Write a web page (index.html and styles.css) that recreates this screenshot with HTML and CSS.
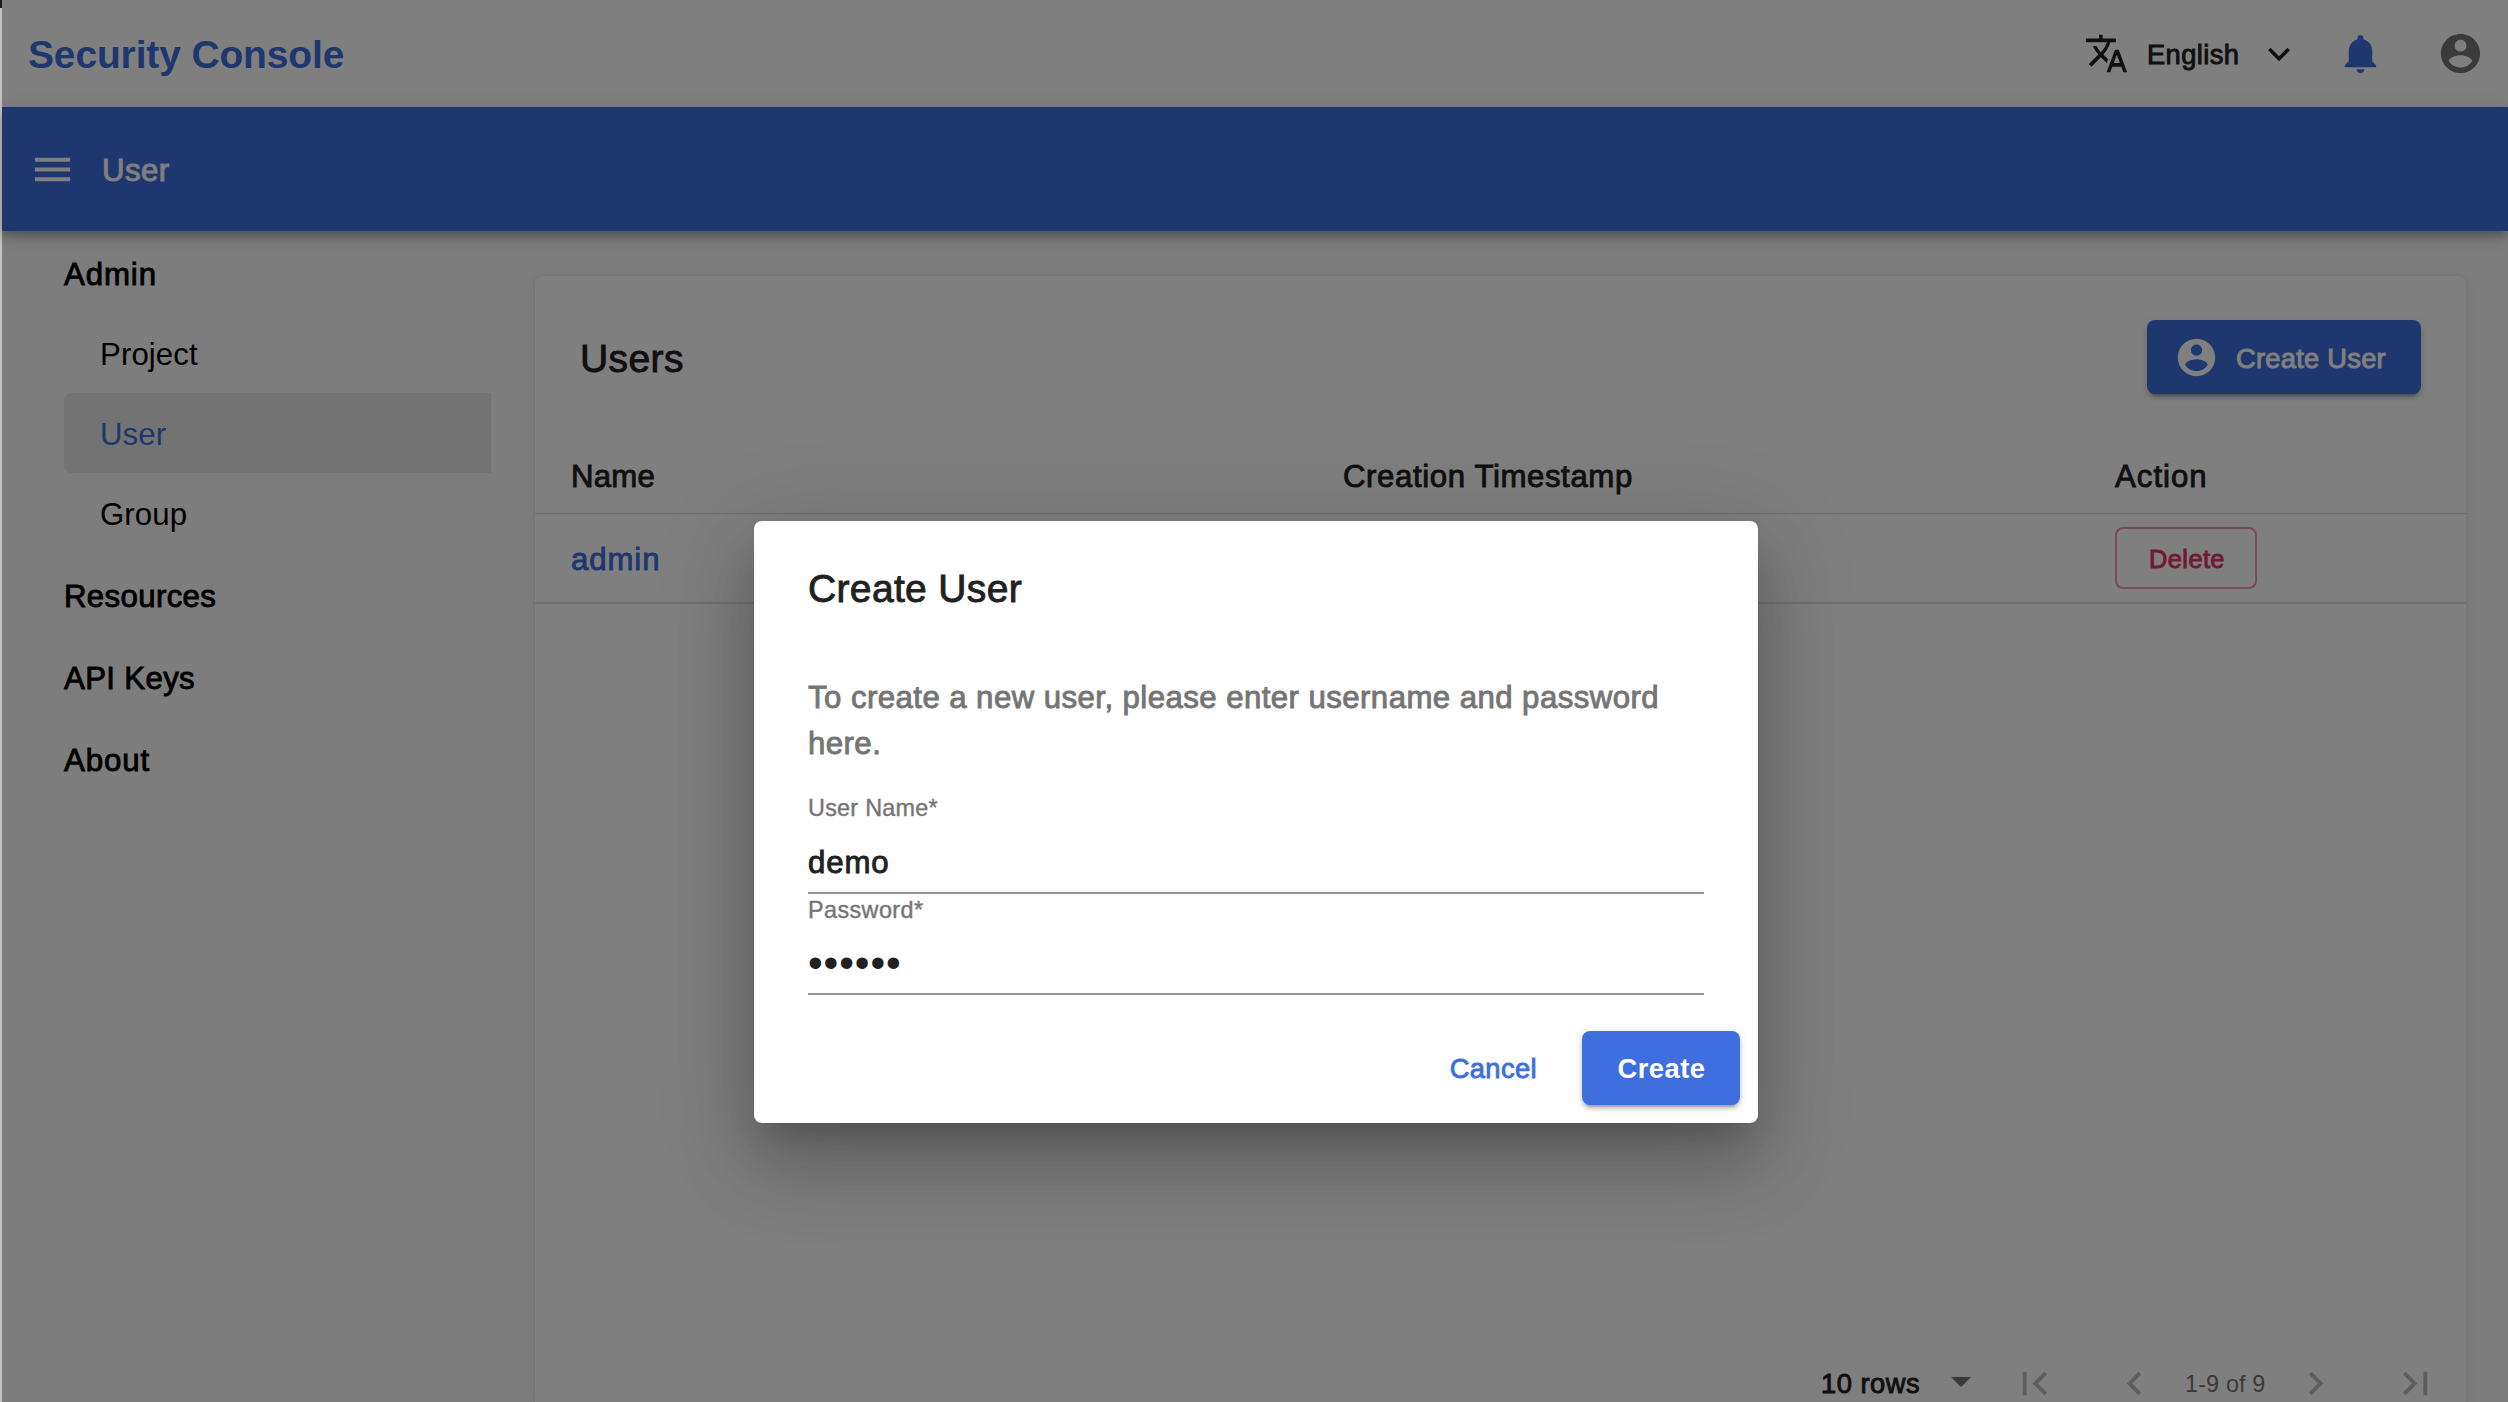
FILE: index.html
```html
<!DOCTYPE html>
<html lang="en">
<head>
<meta charset="utf-8">
<title>Security Console</title>
<link rel="stylesheet" href="styles.css">
</head>
<body>
<div class="app">
  <header class="topbar">
    <h1 class="brand">Security Console</h1>
    <div class="tools">
      <svg class="icon icon-translate" viewBox="0 0 24 24"><path d="M12.87 15.07l-2.54-2.51.03-.03c1.74-1.94 2.98-4.17 3.71-6.53H17V4h-7V2H8v2H1v1.99h11.17C11.5 7.92 10.44 9.75 9 11.35 8.07 10.32 7.3 9.19 6.69 8h-2c.73 1.63 1.73 3.17 2.98 4.56l-5.09 5.02L4 19l5-5 3.11 3.11.76-2.04zM18.5 10h-2L12 22h2l1.12-3h4.75L21 22h2l-4.5-12zm-2.62 7l1.62-4.33L19.12 17h-3.24z"/></svg>
      <span class="language medium">English</span>
      <svg class="icon icon-expand" viewBox="0 0 24 24"><path d="M7.41 8.59 12 13.17l4.59-4.58L18 10l-6 6-6-6z"/></svg>
      <svg class="icon icon-bell" viewBox="0 0 24 24"><path d="M12 22c1.1 0 2-.9 2-2h-4c0 1.1.89 2 2 2zm6-6v-5c0-3.07-1.64-5.64-4.5-6.32V4c0-.83-.67-1.5-1.5-1.5s-1.5.67-1.5 1.5v.68C7.63 5.36 6 7.92 6 11v5l-2 2v1h16v-1l-2-2z"/></svg>
      <svg class="icon icon-account" viewBox="0 0 24 24"><path d="M12 2C6.48 2 2 6.48 2 12s4.48 10 10 10 10-4.48 10-10S17.52 2 12 2zm0 3c1.66 0 3 1.34 3 3s-1.34 3-3 3-3-1.34-3-3 1.34-3 3-3zm0 14.2c-2.5 0-4.71-1.28-6-3.22.03-1.99 4-3.08 6-3.08 1.99 0 5.97 1.09 6 3.08-1.29 1.94-3.5 3.22-6 3.22z"/></svg>
    </div>
  </header>

  <div class="appbar">
    <svg class="icon" viewBox="0 0 24 24"><path d="M3 18h18v-2H3v2zm0-5h18v-2H3v2zm0-7v2h18V6H3z"/></svg>
    <span class="appbar-title medium">User</span>
  </div>

  <div class="body">
    <nav class="sidebar">
      <a class="nav-head medium">Admin</a>
      <a class="nav-item">Project</a>
      <a class="nav-item active">User</a>
      <a class="nav-item">Group</a>
      <a class="nav-head nav-tight medium">Resources</a>
      <a class="nav-head nav-tight medium">API Keys</a>
      <a class="nav-head medium">About</a>
    </nav>

    <main class="card">
      <div class="card-head">
        <h2 class="card-title medium">Users</h2>
        <button class="btn btn-primary btn-create-user">
          <svg class="icon" viewBox="0 0 24 24"><path d="M12 2C6.48 2 2 6.48 2 12s4.48 10 10 10 10-4.48 10-10S17.52 2 12 2zm0 3c1.66 0 3 1.34 3 3s-1.34 3-3 3-3-1.34-3-3 1.34-3 3-3zm0 14.2c-2.5 0-4.71-1.28-6-3.22.03-1.99 4-3.08 6-3.08 1.99 0 5.97 1.09 6 3.08-1.29 1.94-3.5 3.22-6 3.22z"/></svg>
          <span class="medium">Create User</span>
        </button>
      </div>
      <div class="row row-head">
        <span class="cell name medium">Name</span>
        <span class="cell medium">Creation Timestamp</span>
        <span class="cell action medium">Action</span>
      </div>
      <div class="row row-data">
        <span class="cell link medium">admin</span>
        <span class="cell"></span>
        <span class="cell"><button class="btn-delete medium">Delete</button></span>
      </div>
      <div class="pager">
        <span class="rows medium">10 rows</span>
        <span class="caret"></span>
        <svg class="icon pg-first" viewBox="0 0 24 24"><path d="M18.41 16.59L13.82 12l4.59-4.59L17 6l-6 6 6 6zM6 6h2v12H6z"/></svg>
        <svg class="icon pg-prev" viewBox="0 0 24 24"><path d="M15.41 7.41L14 6l-6 6 6 6 1.41-1.41L10.83 12z"/></svg>
        <span class="range">1-9 of 9</span>
        <svg class="icon pg-next" viewBox="0 0 24 24"><path d="M10 6L8.59 7.41 13.17 12l-4.58 4.59L10 18l6-6z"/></svg>
        <svg class="icon pg-last" viewBox="0 0 24 24"><path d="M5.59 7.41L10.18 12l-4.59 4.59L7 18l6-6-6-6zM16 6h2v12h-2z"/></svg>
      </div>
    </main>
  </div>
</div>

<div class="backdrop">
  <section class="dialog">
    <h2 class="dialog-title medium">Create User</h2>
    <p class="dialog-text medium">To create a new user, please enter username and password here.</p>
    <label class="field">
      <span class="field-label">User Name*</span>
      <span class="field-value medium">demo</span>
    </label>
    <label class="field field-password">
      <span class="field-label">Password*</span>
      <span class="field-value dots">••••••</span>
    </label>
    <div class="dialog-actions">
      <button class="btn btn-text medium">Cancel</button>
      <button class="btn btn-primary btn-create">Create</button>
    </div>
  </section>
</div>
</body>
</html>
```
FILE: styles.css
```css
* { box-sizing: border-box; }

body {
  margin: 0;
  height: 1402px;
  overflow: hidden;
  background: linear-gradient(#1c1c1c 8px, #c4c4c4 8px);
  font-family: "Liberation Sans", Arial, sans-serif;
  font-size: 31.2px;
  color: #212121;
}

h1, h2, p { margin: 0; font-weight: 400; }
button { font-family: inherit; margin: 0; padding: 0; border: 0; background: none; }

.medium { -webkit-text-stroke: 0.9px currentColor; }

.icon { display: block; flex: none; width: 47px; height: 47px; fill: currentColor; }

.app {
  display: flex;
  flex-direction: column;
  height: 1402px;
  margin-left: 2px;
  background: #fafafa;
}

/* top bar */
.topbar {
  flex: none;
  display: flex;
  align-items: center;
  justify-content: space-between;
  height: 107px;
  padding: 0 24px 0 26px;
  background: #fff;
}
.brand {
  padding-top: 3px;
  font-size: 39px;
  font-weight: 700;
  line-height: 46px;
  letter-spacing: -0.15px;
  color: #3f6fdf;
}
.tools { display: flex; align-items: center; color: #212121; }
.icon-translate { width: 45px; height: 45px; }
.language { width: 93px; margin-left: 18px; padding-top: 2px; font-size: 27.3px; line-height: 34px; letter-spacing: 0.4px; }
.icon-expand { width: 44px; height: 44px; margin-left: 17px; }
.icon-bell { margin-left: 36px; color: #3f6fdf; }
.icon-account { margin-left: 53px; color: #757575; }

/* blue bar */
.appbar {
  flex: none;
  z-index: 1;
  display: flex;
  align-items: center;
  height: 124px;
  padding-left: 27px;
  background: #3f6fdf;
  color: #fff;
  box-shadow: 0 4px 8px -2px rgba(0,0,0,.2), 0 8px 10px rgba(0,0,0,.14), 0 2px 20px rgba(0,0,0,.12);
}
.appbar-title { margin-left: 26px; padding-top: 3px; line-height: 40px; letter-spacing: 0.4px; }

.body { flex: 1; display: flex; min-height: 0; }

/* sidebar */
.sidebar { width: 489px; padding-left: 62px; color: #000; }
.nav-head, .nav-item { display: block; letter-spacing: 0.9px; }
.nav-head { height: 82px; padding-top: 4px; line-height: 80px; }
.nav-tight { letter-spacing: 0.35px; }
.nav-item {
  height: 80px;
  padding: 2px 0 0 36px;
  line-height: 80px;
  letter-spacing: 0.1px;
}
.nav-item.active { background: #e6e6e6; color: #3f6fdf; border-radius: 8px 0 0 8px; }

/* card */
.card {
  display: flex;
  flex-direction: column;
  width: 1931px;
  margin: 45px 0 0 44px;
  background: #fff;
  border-radius: 8px 8px 0 0;
  box-shadow: 0 4px 2px -2px rgba(0,0,0,.08), 0 2px 2px rgba(0,0,0,.06), 0 2px 10px rgba(0,0,0,.12);
}
.card-head {
  display: flex;
  justify-content: space-between;
  align-items: center;
  padding: 44px 45px 0 45px;
}
.card-title { padding-top: 3px; font-size: 39px; line-height: 46px; letter-spacing: 0.4px; }

.btn { display: flex; align-items: center; height: 74px; font-size: 27.3px; letter-spacing: 0.6px; }
.btn-primary {
  border-radius: 8px;
  background: #3f6fdf;
  color: #fff;
  box-shadow: 0 6px 2px -4px rgba(0,0,0,.2), 0 4px 4px rgba(0,0,0,.14), 0 2px 10px rgba(0,0,0,.12);
}
.btn-create-user { width: 274px; padding: 0 0 0 27px; letter-spacing: 0.25px; }
.btn-create-user .icon { width: 45px; height: 45px; }
.btn-create-user span { margin-left: 17px; padding-top: 4px; }

.row { flex: none; display: grid; grid-template-columns: 772px 772px 1fr; align-items: center; }
.cell { padding-left: 36px; letter-spacing: 0.6px; }
.name { letter-spacing: 0.2px; }
.action { letter-spacing: 1px; }
.row-head { height: 120px; padding-top: 47px; border-bottom: 1px solid #dadada; }
.row-data { height: 90px; border-bottom: 2px solid #e0e0e0; }
.link { padding-top: 4px; letter-spacing: 0.9px; color: #3f6fdf; }
.btn-delete {
  display: block;
  width: 142px;
  height: 62px;
  padding: 2px 0 0 2px;
  border: 2px solid #f094b4;
  border-radius: 8px;
  font-size: 25.4px;
  letter-spacing: 0.4px;
  color: #e03463;
}

.pager { display: flex; align-items: center; height: 37px; margin-top: auto; color: #bdbdbd; }
.rows {
  flex: none;
  width: 99px;
  margin-left: 1286px;
  padding-top: 1px;
  font-size: 27.3px;
  line-height: 32px;
  letter-spacing: 0.5px;
  white-space: nowrap;
  color: #212121;
}
.caret {
  margin: -4px 0 0 31px;
  border: 10px solid transparent;
  border-top-color: #757575;
  border-bottom: 0;
}
.pg-first { margin-left: 40px; }
.pg-prev { margin-left: 53px; }
.range { width: 81px; margin-left: 27px; padding-top: 2px; font-size: 23.4px; letter-spacing: 0.15px; white-space: nowrap; color: #757575; }
.pg-next { margin-left: 26px; }
.pg-last { margin-left: 53px; }

/* dialog */
.backdrop {
  position: absolute;
  top: 0;
  left: 2px;
  right: 0;
  bottom: 0;
  z-index: 10;
  padding: 521px 0 0 2px;
  overflow: hidden;
  background: rgba(0,0,0,.5);
}
.dialog {
  width: 1004px;
  height: 602px;
  margin: 0 auto;
  padding: 45px 18px 18px 54px;
  display: flex;
  flex-direction: column;
  background: #fff;
  border-radius: 8px;
  box-shadow: 0 22px 30px -14px rgba(0,0,0,.2), 0 48px 76px 6px rgba(0,0,0,.14), 0 18px 92px 16px rgba(0,0,0,.12);
}
.dialog-title { font-size: 39px; line-height: 46px; letter-spacing: 0.35px; }
.dialog-text { margin-top: 63px; width: 896px; line-height: 46px; letter-spacing: 0.43px; color: #757575; }
.field { display: flex; flex-direction: column; width: 896px; height: 127px; border-bottom: 2px solid #949494; }
.field-label { margin-top: 26px; font-size: 23.4px; line-height: 30px; letter-spacing: 0.25px; color: #757575; -webkit-text-stroke: 0.4px currentColor; }
.field-value { margin-top: 20px; line-height: 40px; letter-spacing: 0.9px; }
.field-password { height: 101px; }
.field-password .field-label { margin-top: 1px; letter-spacing: 0.4px; }
.dots { margin-top: 18px; font-size: 42px; letter-spacing: 0.9px; }
.dialog-actions { display: flex; justify-content: flex-end; margin-top: auto; }
.btn-text { padding: 2px 45px 0 44px; letter-spacing: 0.4px; color: #3f6fdf; }
.btn-create { justify-content: center; width: 158px; padding: 2px 0 0 1px; font-weight: 700; letter-spacing: 0.5px; }
```
